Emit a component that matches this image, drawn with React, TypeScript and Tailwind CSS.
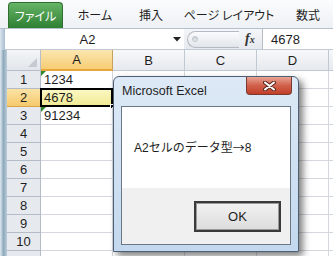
import React from "react";

const rows = [1, 2, 3, 4, 5, 6, 7, 8, 9, 10, 11];
const cellVals: Record<number, string> = { 1: "1234", 2: "4678", 3: "91234" };

function Tri() {
  return (
    <svg className="absolute left-0 top-0" width="5" height="5" viewBox="0 0 5 5">
      <polygon points="0,0 5,0 0,5" fill="#2f8a2f" />
    </svg>
  );
}

export default function App() {
  const jp = "[font-family:'Noto_Sans_CJK_JP',sans-serif] [font-feature-settings:'palt']";
  return (
    <div className="relative w-[333px] h-[256px] overflow-hidden bg-white [font-family:'Liberation_Sans','Noto_Sans_CJK_JP',sans-serif] text-[#1e1e1e]">
      {/* ribbon tabs */}
      <div className={`h-[29px] flex items-end pl-[8px] bg-gradient-to-b from-[#fbfcfd] to-[#eef1f5] border-b border-[#b6c0cc] text-[12px] ${jp}`}>
        <div className="w-[55px] shrink-0 h-[26px] rounded-t-[4px] border border-b-0 border-[#2f6f31] bg-gradient-to-b from-[#66b466] to-[#2e8033] text-white flex items-center justify-center leading-none">
          ファイル
        </div>
        <div className="w-[64px] shrink-0 h-[27px] flex items-center justify-center leading-none">ホーム</div>
        <div className="w-[48px] shrink-0 h-[27px] flex items-center justify-center leading-none">挿入</div>
        <div className="w-[108px] shrink-0 h-[27px] flex items-center justify-center leading-none">ページ レイアウト</div>
        <div className="w-[50px] shrink-0 h-[27px] flex items-center justify-center leading-none">数式</div>
      </div>

      {/* formula bar */}
      <div className="h-[21px] flex">
        <div className="w-[5px] shrink-0 bg-gradient-to-r from-[#dbe5ef] to-[#a8bcd0]" />
        <div className="w-[179px] shrink-0 bg-white border-b border-[#c3cad4] flex items-center">
          <div className="w-[165px] text-center text-[13px] leading-none">A2</div>
          <svg width="8" height="5" viewBox="0 0 8 5" className="ml-[3px]">
            <polygon points="0,0 8,0 4,4.5" fill="#222" />
          </svg>
        </div>
        <div className="w-[79px] shrink-0 bg-gradient-to-b from-[#f4f6f8] to-[#e6e9ee] border-b border-[#c3cad4] flex items-center pl-[3px] border-r border-r-[#b5bdc8]">
          <div className="relative w-[52px] h-[17px] rounded-l-full border border-r-0 border-[#b3bac4] bg-gradient-to-b from-[#fafbfc] to-[#e2e6eb] flex items-center">
            <div className="ml-[4px] w-[6px] h-[6px] rounded-full bg-gradient-to-b from-[#c9ced5] to-[#e9ecef] border border-[#c0c6ce]" />
          </div>
          <span className="ml-[6px] text-[14px] italic font-bold leading-none [font-family:'Liberation_Serif',serif] text-[#333]">
            f<span className="text-[10px]">x</span>
          </span>
        </div>
        <div className="flex-1 bg-white border-b border-[#c3cad4] flex items-center pl-[8px] text-[13px] leading-none">4678</div>
      </div>

      {/* grid */}
      <div className="flex">
        <div className="w-[7px] shrink-0 h-[206px] bg-gradient-to-r from-[#e1e9f1] via-[#8eaabb] to-[#bccdda]" />
        <div className="flex-1 min-w-0">
          {/* header row */}
          <div className="flex h-[21px] text-[13px] leading-none">
            <div className="w-[34px] shrink-0 relative bg-gradient-to-b from-[#f3f5f7] to-[#e2e6eb] border-r border-b border-[#b5bec9]">
              <svg className="absolute right-[3px] bottom-[3px]" width="9" height="9" viewBox="0 0 9 9">
                <polygon points="9,0 9,9 0,9" fill="#c6cbd1" />
              </svg>
            </div>
            <div className="w-[72px] shrink-0 bg-gradient-to-b from-[#fbe6b0] to-[#f6cd72] border-r border-[#c6a25a] border-b-2 border-b-[#e6a63c] flex items-center justify-center">A</div>
            {["B", "C", "D", ""].map((c) => (
              <div key={c} className="w-[72px] shrink-0 bg-gradient-to-b from-[#f7f8fa] to-[#e6e9ee] border-r border-b border-[#c0c8d2] flex items-center justify-center">
                {c}
              </div>
            ))}
          </div>
          {rows.map((r) => (
            <div key={r} className="flex h-[18px] text-[13px] leading-none">
              <div
                className={`w-[34px] shrink-0 border-r border-b flex items-center justify-center ${
                  r === 2
                    ? "bg-gradient-to-b from-[#fbe3a4] to-[#f5c96c] border-[#d9a548]"
                    : "bg-[#e6e9ed] border-[#b3bcc7]"
                }`}
              >
                {r <= 10 ? r : ""}
              </div>
              <div
                className={`relative w-[72px] shrink-0 border-r border-b border-[#d4d8de] flex items-center pl-[3px] ${
                  r === 2 ? "bg-gradient-to-b from-[#fbf8c4] to-[#f2ea92]" : ""
                }`}
              >
                {cellVals[r] ?? ""}
                {(r === 1 || r === 3) && <Tri />}
                {r === 2 && (
                  <>
                    <div className="absolute left-[-1px] top-[-1px] right-[-1px] bottom-[-1px] border-2 border-black" />
                    <div className="absolute right-[-3px] bottom-[-3px] w-[5px] h-[5px] bg-black border border-white" />
                  </>
                )}
              </div>
              {[0, 1, 2, 3].map((i) => (
                <div key={i} className="w-[72px] shrink-0 border-r border-b border-[#d4d8de]" />
              ))}
            </div>
          ))}
        </div>
      </div>

      {/* dialog */}
      <div className="absolute left-[113px] top-[76px] w-[186px] h-[176px] rounded-t-[6px] border border-[#4c5f73] bg-gradient-to-b from-[#dde9f6] to-[#c3d8ee] shadow-[4px_4px_7px_rgba(0,0,0,0.5)] flex flex-col">
        <div className="h-[29px] shrink-0 relative flex items-center pl-[8px] text-[12.5px] text-[#1e1e1e] leading-none">
          Microsoft Excel
          <div className="absolute right-[6px] top-0 w-[46px] h-[18px] rounded-b-[4px] border border-t-0 border-[#7a3a30] bg-gradient-to-b from-[#e8a394] via-[#d0604b] to-[#c23f27] flex items-center justify-center">
            <svg width="13" height="10" viewBox="0 0 13 10">
              <path d="M2,1.5 L11,8.5 M11,1.5 L2,8.5" stroke="#5a2a22" strokeWidth="4" strokeLinecap="round" />
              <path d="M2,1.5 L11,8.5 M11,1.5 L2,8.5" stroke="#ffffff" strokeWidth="2" strokeLinecap="round" />
            </svg>
          </div>
        </div>
        <div className="mx-[7px] mb-[6px] flex-1 border border-[#6a7785] flex flex-col">
          <div className="h-[81px] bg-white flex items-center pl-[12px] text-[12px] leading-none">
            A2セルのデータ型<span className="[font-family:'Noto_Sans_CJK_JP',sans-serif]">→</span>8
          </div>
          <div className="flex-1 bg-[#f0f0f0] flex items-start justify-end pr-[9px] pt-[13px]">
            <div className="w-[87px] h-[31px] border-2 border-[#3a3a3a] bg-gradient-to-b from-[#f2f2f2] to-[#dcdcdc] shadow-[inset_0_0_0_1px_#9a9a9a] flex items-center justify-center text-[13px] leading-none">
              OK
            </div>
          </div>
        </div>
      </div>
    </div>
  );
}
